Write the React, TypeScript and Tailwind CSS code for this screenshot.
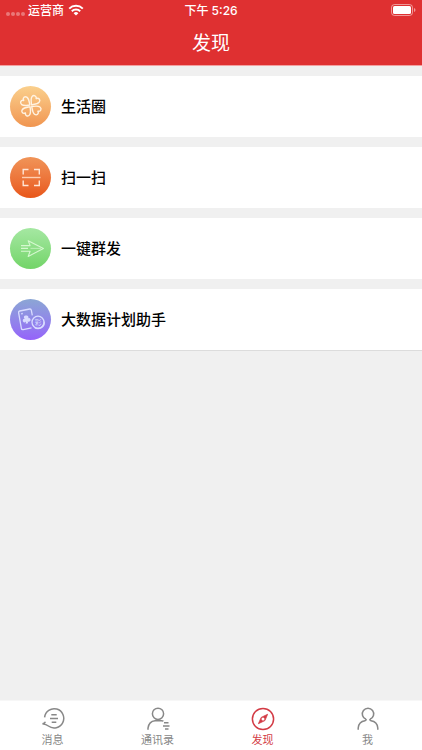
import type { ReactNode } from 'react';

interface MenuItem {
    title: string;
    background: string;
    icon: ReactNode;
}

interface TabItem {
    label: string;
    active?: boolean;
    icon: ReactNode;
}

const CloverIcon = () => (
    <svg viewBox="0 0 41 41" className="size-full" fill="none" stroke="#fff3e2" strokeWidth="1.4" strokeLinejoin="round">
        {[-53, 37, 127, 217].map((angle) => (
            <path
                key={angle}
                transform={`translate(20.8 19.8) rotate(${angle})`}
                d="M0 -1.2C-2.2 -3.6 -4.5 -5.4 -4.5 -8C-4.5 -10.8 -1.2 -11.6 0 -8.9C1.2 -11.6 4.5 -10.8 4.5 -8C4.5 -5.4 2.2 -3.6 0 -1.2Z"
            />
        ))}
    </svg>
);

const ScanIcon = () => (
    <svg viewBox="0 0 41 41" className="size-full" fill="none" stroke="#ffe6d6" strokeWidth="1.4">
        <path d="M13.2 17.5V12.5H18.5M24 12.5H29.3V17.5M29.3 23.5V28.5H24M18.5 28.5H13.2V23.5" />
        <path d="M12 20.5H30.5" stroke="#ffcfb2" />
    </svg>
);

const SendIcon = () => (
    <svg viewBox="0 0 41 41" className="size-full" fill="none" stroke="#d6f8d0" strokeWidth="1.1" strokeLinejoin="round">
        <path d="M11 17.6H20.1L18.2 12.8L33.4 20.5L18.2 28.4L20.1 23.2H11M11 20.4H18" />
        <path d="M20.5 20.4H31" strokeOpacity="0.6" />
    </svg>
);

const CardsIcon = () => (
    <svg viewBox="0 0 41 41" className="size-full" fill="none" stroke="#d9dcff" strokeWidth="1.3" strokeLinejoin="round">
        <path d="M21.5 28.8L13.2 30.6Q11.7 30.9 11.4 29.5L8.6 13.6Q8.4 12.3 9.7 12L19.7 10Q21 9.8 21.3 11.1L22.3 16.4" />
        <path d="M11.2 14.8L12.8 14.5" />
        <path d="M16.2 16.5A1.8 1.8 0 0 1 18.2 19.2A1.8 1.8 0 1 1 17.6 22.2L18.2 24.3L15.7 24.8L16 22.6A1.8 1.8 0 1 1 14.8 19.8A1.8 1.8 0 0 1 16.2 16.5Z" fill="#d9dcff" stroke="none" />
        <circle cx="28" cy="23.2" r="6" />
        <path d="M24.5 28.4C28 31 35 29 34.2 22.7" />
        <text x="28" y="26" textAnchor="middle" fontSize="7" fill="#d9dcff" stroke="none">彩</text>
    </svg>
);

const MessageIcon = () => (
    <svg viewBox="0 0 24 24" className="size-6" fill="none" stroke="currentColor" strokeWidth="1.5">
        <path d="M3.6 10.4A9.6 9.6 0 1 1 7.4 19Q5.2 17.5 1.5 16.8Q3.7 16.5 4.4 14.8" />
        <path d="M10.3 7.8H15.7M9 11.5H17M10.7 15.2H15.3" />
    </svg>
);

const ContactsIcon = () => (
    <svg viewBox="0 0 24 24" className="size-6" fill="none" stroke="currentColor" strokeWidth="1.5">
        <circle cx="12" cy="6.8" r="5.6" />
        <path d="M2 22.8V21Q3 14.2 9 13.7H15.5Q16.8 13.7 17.4 14.3" />
        <path d="M18 15.7H22.5M17 18.9H23.5M19 22H22.5" />
    </svg>
);

const CompassIcon = () => (
    <svg viewBox="0 0 24 24" className="size-6" fill="none" stroke="currentColor" strokeWidth="1.5">
        <circle cx="12" cy="12" r="10.6" />
        <path d="M16.6 7.3L13.9 13.6L7.4 16.7L10.2 10.4Z" fill="currentColor" strokeWidth="0.8" />
        <circle cx="12" cy="12" r="1.5" fill="#fff" stroke="none" />
    </svg>
);

const ProfileIcon = () => (
    <svg viewBox="0 0 24 24" className="size-6" fill="none" stroke="currentColor" strokeWidth="1.5">
        <path d="M10 12.2A5.7 5.7 0 1 1 14 12.2" />
        <path d="M2.2 22.8V21Q2.8 14.4 9 13.7Q10.2 13.6 10.2 12M13.8 12Q13.8 13.6 15 13.7Q21.2 14.4 21.8 21V22.8" />
    </svg>
);

const menuItems: MenuItem[] = [
    { title: '生活圈', background: 'from-[#fad08d] to-[#f09550]', icon: <CloverIcon /> },
    { title: '扫一扫', background: 'from-[#f09458] to-[#e85618]', icon: <ScanIcon /> },
    { title: '一键群发', background: 'from-[#a5e8a2] to-[#72d468]', icon: <SendIcon /> },
    { title: '大数据计划助手', background: 'from-[#8ba6d4] to-[#9562fa]', icon: <CardsIcon /> },
];

const tabs: TabItem[] = [
    { label: '消息', icon: <MessageIcon /> },
    { label: '通讯录', icon: <ContactsIcon /> },
    { label: '发现', active: true, icon: <CompassIcon /> },
    { label: '我', icon: <ProfileIcon /> },
];

const StatusBar = () => (
    <div className="grid h-5 grid-cols-3 items-center px-1.5 text-xs font-medium">
        <div className="flex items-center">
            <div className="flex w-[22px] gap-px">
                {[0, 1, 2, 3].map((dot) => (
                    <span key={dot} className="mt-2 size-1 rounded-full bg-white/35" />
                ))}
            </div>
            <span className="pt-0.5">运营商</span>
            <svg viewBox="0 0 16 12" className="ml-1 h-3 w-4" fill="none" stroke="#fff" strokeWidth="2">
                <path d="M1.2 4.6A9.8 9.8 0 0 1 14.8 4.6M3.8 7.3A6 6 0 0 1 12.2 7.3" />
                <path d="M8 11.6L5.6 9.2A3.4 3.4 0 0 1 10.4 9.2Z" fill="#fff" stroke="none" />
            </svg>
        </div>
        <span className="pt-0.5 text-center">下午 5:26</span>
        <svg viewBox="0 0 25 12" className="h-3 w-[25px] justify-self-end" fill="none">
            <rect x="0.5" y="0.5" width="21" height="11" rx="3" stroke="#fff" strokeOpacity="0.5" />
            <rect x="2" y="2" width="18" height="8" rx="1.5" fill="#fff" />
            <path d="M23 4V8Q24.5 7.4 24.5 6Q24.5 4.6 23 4Z" fill="#fff" fillOpacity="0.5" />
        </svg>
    </div>
);

const MenuRow = ({ item }: { item: MenuItem }) => (
    <li>
        <button type="button" className="flex h-[61px] w-full items-center gap-2.5 bg-white px-2.5 text-left">
            <span className={`size-[41px] shrink-0 rounded-full bg-linear-to-b ${item.background}`}>
                {item.icon}
            </span>
            <span className="pt-0.5 text-[15px] font-medium text-black">{item.title}</span>
        </button>
    </li>
);

const App = () => {
    return (
        <div className="flex min-h-screen flex-col bg-[#f0f0f0] font-[Inter,'Noto_Sans_CJK_SC',sans-serif]">
            <header className="border-b border-[#f3a0a0] bg-[#df3031] text-white">
                <StatusBar />
                <h1 className="flex h-[45px] items-center justify-center pt-1 text-[19px]">发现</h1>
            </header>
            <main className="flex-1 pt-2.5">
                <ul className="flex flex-col gap-2.5">
                    {menuItems.map((item) => (
                        <MenuRow key={item.title} item={item} />
                    ))}
                </ul>
                <div className="ml-5 border-t border-[#dcdcdc]" />
            </main>
            <nav className="grid h-[50px] grid-cols-4 border-t border-[#f7f7f7] bg-white pr-0.5">
                {tabs.map((tab) => (
                    <a
                        key={tab.label}
                        href="#"
                        aria-current={tab.active ? 'page' : undefined}
                        className={`flex flex-col items-center pt-1.5 ${tab.active ? 'text-[#d33b45]' : 'text-[#888888]'}`}
                    >
                        {tab.icon}
                        <span className="pt-px text-[11px] leading-4">{tab.label}</span>
                    </a>
                ))}
            </nav>
        </div>
    );
};

export default App;
